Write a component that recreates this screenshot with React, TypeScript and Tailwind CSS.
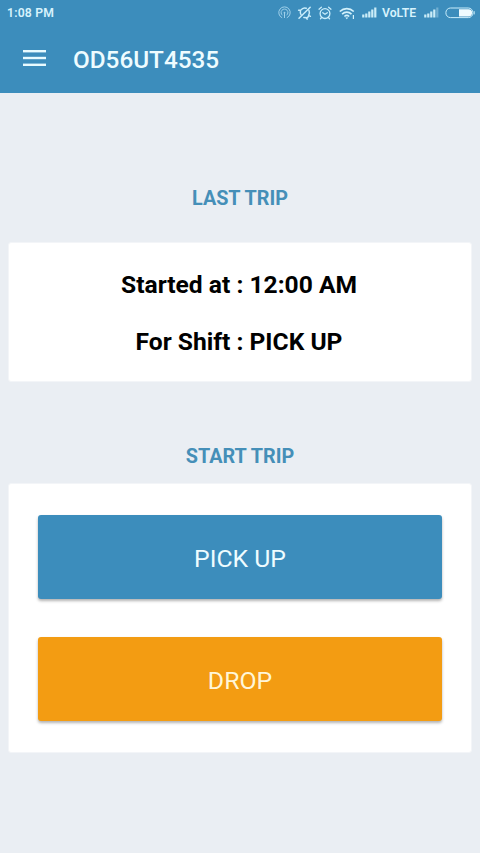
function HotspotIcon() {
  return (
    <svg width="13" height="13" viewBox="0 0 13 13" fill="none" stroke="#9fd0ea" strokeWidth="1" className="mt-[-1px] shrink-0">
      <path d="M4.2 11.8a5.7 5.7 0 1 1 4.6 0" />
      <path d="M4.6 9.3a3.4 3.4 0 1 1 3.8 0" />
      <circle cx="6.5" cy="6.7" r="0.9" fill="#9fd0ea" stroke="none" />
      <path d="M6.5 7v5" />
    </svg>
  );
}

function MutedBellIcon() {
  return (
    <svg width="15" height="14" viewBox="0 0 15 14" fill="none" stroke="#c9edfb" strokeWidth="1.5" strokeLinecap="round" strokeLinejoin="round" className="ml-[6px] mt-[-1px] shrink-0">
      <path d="M1.6 4.2l2.2-.1C5.2 2.2 7.400 1.500 9.300 2.300M11.900 4.300c.8 1.700.5 3.400-.3 5l1.800 1M3.400 5.200c-.3 1.500 0 2.700.7 3.700M6.800 11.400l3.700.4.900-1.700" />
      <path d="M13.200 1.200L2 12.300" />
      <path d="M9.600 12.400l.5.700" />
    </svg>
  );
}

function AlarmIcon() {
  return (
    <svg width="14" height="14" viewBox="0 0 14 14" fill="none" stroke="#c9edfb" strokeWidth="1.3" strokeLinecap="round" strokeLinejoin="round" className="ml-[6px] mt-[-1px] shrink-0">
      <circle cx="7" cy="7.6" r="4.9" />
      <path d="M1 3.2L3.4 1.2M13 3.2L10.6 1.2M4.8 6.7L7 8.3l2.3-1.6M3.4 11.8l-.9 1M10.6 11.8l.9 1" />
    </svg>
  );
}

function WifiIcon() {
  return (
    <svg width="17" height="13" viewBox="0 0 17 13" fill="none" stroke="#d3f1fb" strokeWidth="1.6" className="ml-[7px] shrink-0">
      <path d="M.8 4.5c4-3.9 10-3.9 14 0M3.1 7.1c2.7-2.6 6.7-2.6 9.4 0M5.4 9.5c1.4-1.3 3.4-1.3 4.8 0" />
      <path d="M6.3 10.6h3l-1.5 1.7z" fill="#d3f1fb" stroke="none" />
      <path d="M14.400 8v4" strokeWidth="1.2" />
    </svg>
  );
}

function SignalIcon({ strength, className }: { strength: number; className: string }) {
  const bars = [3, 4, 6, 8, 10];
  return (
    <svg width="15" height="11" viewBox="0 0 15 11" className={className}>
      {bars.map((h, i) => (
        <rect key={i} x={i * 3 + 0.2} y={10.5 - h} width="2.2" height={h} fill="#d3f1fb" opacity={i < strength ? 0.95 : 0.35} />
      ))}
    </svg>
  );
}

function BatteryIcon() {
  return (
    <svg width="30" height="12" viewBox="0 0 30 12" className="ml-[6px] shrink-0">
      <rect x=".9" y="1" width="27" height="9.6" rx="4.6" fill="none" stroke="#c9edfb" strokeWidth="1" />
      <path d="M14 2.2h9.5a3.6 3.6 0 0 1 0 7.2H14z" fill="#effbff" />
      <path d="M29.2 4.2v3.2" stroke="#c9edfb" strokeWidth="1" />
    </svg>
  );
}

function MenuIcon() {
  return (
    <svg width="23" height="17" viewBox="0 0 23 17" fill="#e8fbff">
      <rect y="0" width="23" height="2.4" />
      <rect y="6.8" width="23" height="2.4" />
      <rect y="13.600" width="23" height="2.4" />
    </svg>
  );
}

function Header() {
  return (
    <header className="h-[93px] bg-[#3c8dbc]">
      <div className="flex h-[26px] items-center pl-[7px] text-[12.2px] font-semibold text-[#d7f3fc]">
        <span className="leading-[26px] tracking-[0.2px]">1:08 PM</span>
        <div className="ml-auto flex items-center pr-[5px]">
          <HotspotIcon />
          <MutedBellIcon />
          <AlarmIcon />
          <WifiIcon />
          <SignalIcon strength={5} className="ml-[6px] mt-[-1px] shrink-0" />
          <span className="ml-[5px] w-[35px] whitespace-nowrap leading-[26px]">VoLTE</span>
          <SignalIcon strength={4} className="ml-[7px] mt-[-1px] shrink-0" />
          <BatteryIcon />
        </div>
      </div>
      <div className="flex h-[67px] items-center pl-[23px]">
        <button aria-label="Menu" className="mt-[-2px]">
          <MenuIcon />
        </button>
        <h1 className="ml-[27px] mt-[1px] text-[24.3px] font-medium leading-[28px] text-[#eefcff]">OD56UT4535</h1>
      </div>
    </header>
  );
}

export default function App() {
  return (
    <div className="flex h-[853px] w-[480px] flex-col overflow-hidden bg-[#eaeef3] font-['Roboto',sans-serif]">
      <Header />
      <main className="flex flex-col px-2 text-center">
        <h2 className="mt-[94px] text-[19.8px] font-bold leading-[24px] text-[#458fb8]">LAST TRIP</h2>
        <section className="mt-[31px] flex h-[140px] flex-col rounded-[3px] border border-[#f3f5f8] bg-white pt-[27px] text-[24.6px] font-bold leading-[30px] text-black">
          <p className="ml-[-2px]">Started at : 12:00 AM</p>
          <p className="ml-[-2px] mt-[27px]">For Shift : PICK UP</p>
        </section>
        <h2 className="mt-[63px] text-[19.8px] font-bold leading-[24px] text-[#458fb8]">START TRIP</h2>
        <section className="mt-[14px] flex h-[270px] flex-col gap-[38px] rounded-[3px] border border-[#f3f5f8] bg-white px-[29px] pt-[31px]">
          <button className="h-[84px] shrink-0 rounded-[3px] bg-[#3c8dbc] pt-[4px] text-[24.8px] text-[#eefcff] shadow-[0_2px_3px_rgba(0,0,0,0.3)]">PICK UP</button>
          <button className="h-[84px] shrink-0 rounded-[3px] bg-[#f39c12] pt-[4px] text-[24.8px] text-[#fff6d8] shadow-[0_2px_3px_rgba(0,0,0,0.3)]">DROP</button>
        </section>
      </main>
    </div>
  );
}
